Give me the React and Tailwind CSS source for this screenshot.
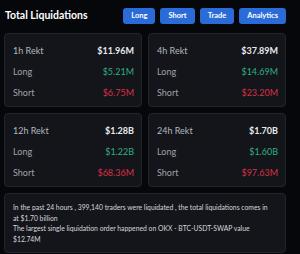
const cards = [
  { label: '1h Rekt', total: '$11.96M', long: '$5.21M', short: '$6.75M' },
  { label: '4h Rekt', total: '$37.89M', long: '$14.69M', short: '$23.20M' },
  { label: '12h Rekt', total: '$1.28B', long: '$1.22B', short: '$68.36M' },
  { label: '24h Rekt', total: '$1.70B', long: '$1.60B', short: '$97.63M' },
];

function StatCard({ card }) {
  return (
    <div className="rounded-[4px] border border-[#22252b] bg-[#13151a] pl-[8px] pr-[7px] pt-[6px] pb-[3px] text-[9px]">
      <div className="flex h-[21px] items-center justify-between">
        <span className="text-[#b4b8bf]">{card.label}</span>
        <span className="font-bold text-[#e8eaed]">{card.total}</span>
      </div>
      <div className="flex h-[21px] items-center justify-between">
        <span className="text-[#9ea3ab]">Long</span>
        <span className="text-[#2fae86]">{card.long}</span>
      </div>
      <div className="flex h-[21px] items-center justify-between">
        <span className="text-[#9ea3ab]">Short</span>
        <span className="text-[#db2f45]">{card.short}</span>
      </div>
    </div>
  );
}

export default function App() {
  return (
    <div className="h-[254px] w-[300px] overflow-hidden bg-[#06070a] pl-[4px] pr-[14px] font-['Lato',sans-serif]">
      {/* Header */}
      <div className="flex h-[33px] items-center justify-between pb-[1px]">
        <h1 className="pl-[1px] text-[10.5px] font-bold text-white">Total Liquidations</h1>
        <div className="flex gap-[5px]">
          {['Long', 'Short', 'Trade', 'Analytics'].map((b) => (
            <button
              key={b}
              className="h-[16px] rounded-[3px] bg-[#2a6bd8] px-[8px] text-[7.5px] font-bold leading-none text-white"
            >
              {b}
            </button>
          ))}
        </div>
      </div>

      {/* Stat cards */}
      <div className="grid grid-cols-2 gap-[6px]">
        {cards.map((c) => (
          <StatCard key={c.label} card={c} />
        ))}
      </div>

      {/* Summary */}
      <div className="mt-[6px] rounded-[4px] border border-[#22252b] bg-[#13151a] pl-[8px] pr-[10px] pt-[8px] pb-[8px] text-[6.8px] leading-[10.5px] text-[#d4d7dc]">
        <p>
          In the past 24 hours , 399,140 traders were liquidated , the total liquidations comes in at $1.70 billion
        </p>
        <p>The largest single liquidation order happened on OKX - BTC-USDT-SWAP value $12.74M</p>
      </div>
      <div className="mt-[5px] h-[20px] rounded-[4px] border border-[#22252b] bg-[#13151a]"></div>
    </div>
  );
}
